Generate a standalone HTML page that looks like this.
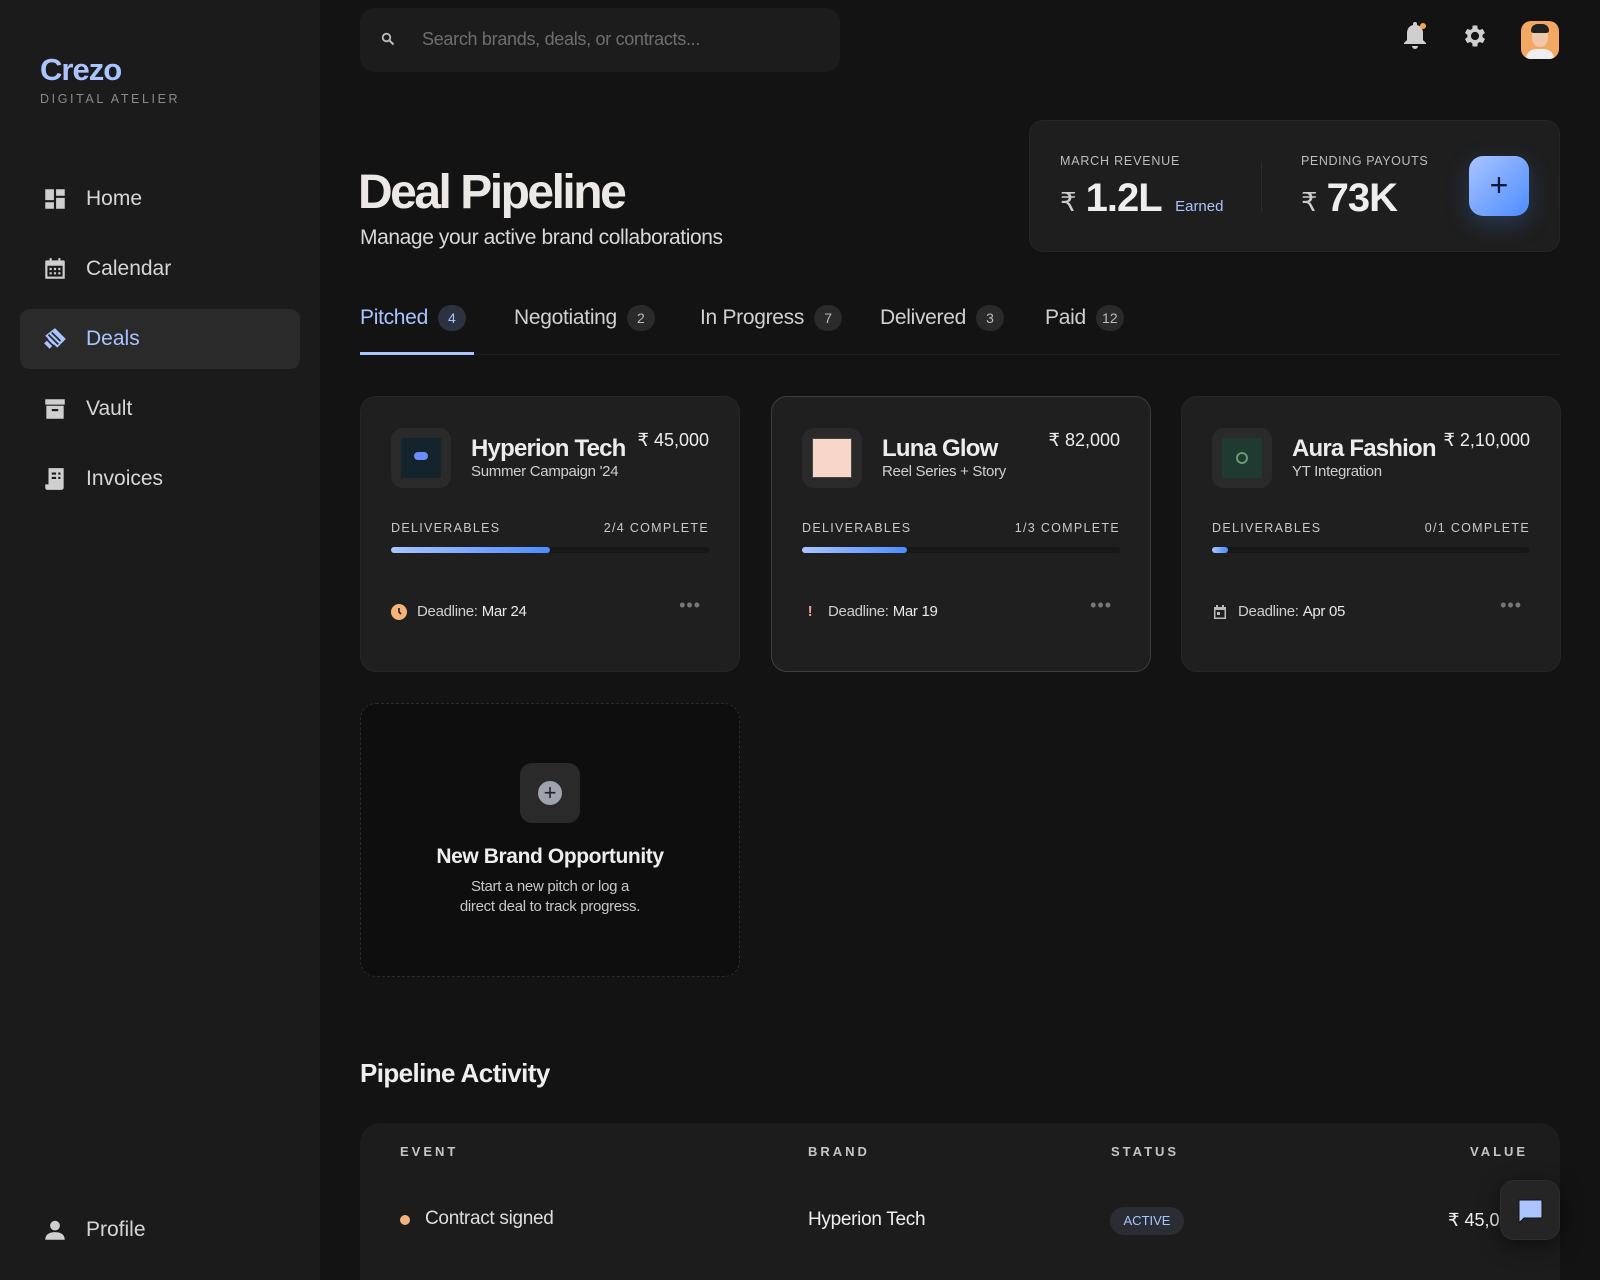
<!DOCTYPE html>
<html><head><meta charset="utf-8"><style>
*{box-sizing:border-box;margin:0;padding:0}
html{width:1600px;height:1280px;overflow:hidden}
body{width:1600px;height:1280px;background:#131313;font-family:"Liberation Sans",sans-serif;color:#e6e3e1;position:relative;overflow:hidden}
.a{position:absolute}
.side{left:0;top:0;width:320px;height:1280px;background:#1b1b1b}
.nav{left:20px;width:280px;height:60px;display:flex;align-items:center;padding-left:22px;font-size:21px;color:#d6d6d6;border-radius:10px}
.nav svg{width:26px;height:26px;margin-right:18px}
.card{width:380px;height:276px;background:#1f1f1f;border-radius:16px;border:1px solid #262626}
.logo{left:30px;top:31px;width:60px;height:60px;background:#2a2a2a;border-radius:12px}
.logo div{position:absolute;left:10px;top:10px;width:40px;height:40px}
.nm{left:110px;top:38px;font-size:24px;font-weight:bold;color:#ececec;letter-spacing:-.8px}
.sub{left:110px;top:66px;font-size:15px;color:#cfcfcf;letter-spacing:-.3px}
.pr{right:30px;top:33px;font-size:18px;color:#ececec}
.lbl{top:124px;font-size:12.5px;letter-spacing:1.3px;color:#c9c9c9}
.bar{left:30px;right:30px;top:150px;height:6px;background:#171717;border-radius:3px}
.bar div{height:6px;border-radius:3px;background:linear-gradient(90deg,#a9c4ff,#4d8cff)}
.dl{left:30px;top:206px;font-size:15px;color:#cfcfcf;display:flex;align-items:center;gap:10px;letter-spacing:-.3px}
.dots{right:38px;top:198px;color:#777;font-size:18px;letter-spacing:1px}
.tab{top:305px;font-size:21px;color:#d0d0d0;display:flex;align-items:center;gap:10px;letter-spacing:-.3px}
.bd{display:inline-block;min-width:28px;height:26px;border-radius:13px;background:#2a2a2a;font-size:14px;text-align:center;line-height:26px;color:#bbb;padding:0 6px;letter-spacing:0}
.th{top:1144px;font-size:13px;letter-spacing:3px;color:#c5c5c5;font-weight:bold}
</style></head><body>
<div class="a side"></div>
<div class="a" style="left:40px;top:52px;font-size:31px;font-weight:bold;color:#a9c4ff;letter-spacing:-1px">Crezo</div>
<div class="a" style="left:40px;top:92px;font-size:12.5px;letter-spacing:2.6px;color:#8a8a8a">DIGITAL ATELIER</div>

<div class="a nav" style="top:169px"><svg viewBox="0 0 24 24"><path fill="#cfcfcf" d="M3 3h8v10H3zM13 3h8v6h-8zM13 11h8v10h-8zM3 15h8v6H3z"/></svg>Home</div>
<div class="a nav" style="top:239px"><svg viewBox="0 0 24 24"><path fill="#cfcfcf" d="M4 4h16a1 1 0 0 1 1 1v16H3V5a1 1 0 0 1 1-1zM7 2h2v4H7zM15 2h2v4h-2z"/><path fill="#1b1b1b" d="M5 9h14v10H5z"/><path fill="#cfcfcf" d="M7 11h2v2H7zM11 11h2v2h-2zM15 11h2v2h-2zM7 15h2v2H7zM11 15h2v2h-2zM15 15h2v2h-2z"/></svg>Calendar</div>
<div class="a nav" style="top:309px;background:#2a2a2a;color:#a9c4ff"><svg viewBox="0 0 24 24"><path fill="#a9c4ff" d="M12 2l10 10-8 8-3-3-4 4-5-5 4-4-3-3z"/><path stroke="#2a2a2a" stroke-width="1.6" d="M6 8l9 9M9 6l8 8M4 12l7 7"/></svg>Deals</div>
<div class="a nav" style="top:379px"><svg viewBox="0 0 24 24"><path fill="#cfcfcf" d="M3 3h18v5H3zM4 9h16v12H4z"/><path fill="#1b1b1b" d="M9 12h6v2H9z"/></svg>Vault</div>
<div class="a nav" style="top:449px"><svg viewBox="0 0 24 24"><path fill="#cfcfcf" d="M6 2h14v18a2 2 0 0 1-2 2H5a2 2 0 0 1-2-2v-3h3z"/><path fill="#1b1b1b" d="M9 6h4v2H9zM9 10h4v2H9zM15 6h2v2h-2zM15 10h2v2h-2z"/></svg>Invoices</div>
<div class="a nav" style="top:1200px"><svg viewBox="0 0 24 24"><circle cx="12" cy="8" r="4.5" fill="#cfcfcf"/><path fill="#cfcfcf" d="M3 21c0-5 4-7 9-7s9 2 9 7z"/></svg>Profile</div>

<div class="a" style="left:360px;top:8px;width:480px;height:64px;background:#1c1c1c;border-radius:14px"></div>
<svg class="a" style="left:381px;top:32px" width="14" height="14" viewBox="0 0 14 14"><circle cx="5.5" cy="5.5" r="3.8" stroke="#bbb" stroke-width="1.8" fill="none"/><path d="M8.5 8.5l4 4" stroke="#bbb" stroke-width="2"/></svg>
<div class="a" style="left:422px;top:29px;font-size:18px;color:#6e6e6e;letter-spacing:-.3px">Search brands, deals, or contracts...</div>

<svg class="a" style="left:1402px;top:20px" width="26" height="30" viewBox="0 0 26 30"><path fill="#cfcfcf" d="M13 2a2 2 0 0 1 2 2v1c4 1 6 4 6 8v7l3 3v1H2v-1l3-3v-7c0-4 2-7 6-8V4a2 2 0 0 1 2-2zM10 26h6a3 3 0 0 1-6 0z"/><circle cx="21" cy="6" r="3" fill="#f5a55a"/></svg>
<svg class="a" style="left:1461px;top:22px" width="28" height="28" viewBox="0 0 24 24"><path fill="#cfcfcf" d="M19.4 13a7.5 7.5 0 0 0 0-2l2.1-1.6-2-3.5-2.5 1a7.5 7.5 0 0 0-1.7-1L15 3h-4l-.4 2.9a7.5 7.5 0 0 0-1.7 1l-2.5-1-2 3.5L6.5 11a7.5 7.5 0 0 0 0 2l-2.1 1.6 2 3.5 2.5-1a7.5 7.5 0 0 0 1.7 1L11 21h4l.4-2.9a7.5 7.5 0 0 0 1.7-1l2.5 1 2-3.5zM13 15.5a3.5 3.5 0 1 1 0-7 3.5 3.5 0 0 1 0 7z" transform="translate(-1 0)"/></svg>
<div class="a" style="left:1521px;top:21px;width:38px;height:38px;border-radius:10px;background:#f3a763;overflow:hidden"><div style="position:absolute;left:11px;top:6px;width:16px;height:20px;border-radius:8px;background:#f0c7a8"></div><div style="position:absolute;left:10px;top:3px;width:18px;height:9px;border-radius:8px 8px 3px 3px;background:#222"></div><div style="position:absolute;left:5px;top:28px;width:28px;height:14px;border-radius:10px 10px 0 0;background:#eee"></div></div>

<div class="a" style="left:358px;top:165px;font-size:48px;font-weight:bold;letter-spacing:-2.5px;color:#ece8e6">Deal Pipeline</div>
<div class="a" style="left:360px;top:226px;font-size:21px;color:#d8d8d8;letter-spacing:-.4px">Manage your active brand collaborations</div>

<div class="a" style="left:1029px;top:120px;width:531px;height:132px;background:#1e1e1e;border-radius:14px;border:1px solid #262626"></div>
<div class="a" style="left:1060px;top:154px;font-size:12.5px;letter-spacing:.8px;color:#bdbdbd">MARCH REVENUE</div>
<div class="a" style="left:1060px;top:176px;font-size:40px;font-weight:bold;color:#eee;letter-spacing:-1px"><span style="font-size:26px;font-weight:normal;color:#ccc">₹</span> 1.2L <span style="font-size:15px;font-weight:normal;color:#a9c4ff;margin-left:4px;letter-spacing:0">Earned</span></div>
<div class="a" style="left:1261px;top:162px;width:1px;height:50px;background:#2c2c2c"></div>
<div class="a" style="left:1301px;top:154px;font-size:12.5px;letter-spacing:.6px;color:#bdbdbd">PENDING PAYOUTS</div>
<div class="a" style="left:1301px;top:176px;font-size:40px;font-weight:bold;color:#eee;letter-spacing:-1px"><span style="font-size:26px;font-weight:normal;color:#ccc">₹</span> 73K</div>
<div class="a" style="left:1469px;top:156px;width:60px;height:60px;border-radius:14px;background:linear-gradient(135deg,#a9c4ff,#4d8cff);box-shadow:0 8px 24px rgba(77,140,255,.25);color:#0b1a3a;font-size:32px;text-align:center;line-height:58px">+</div>

<div class="a tab" style="left:360px;color:#a9c4ff">Pitched <span class="bd" style="background:#2c3240;color:#a9c4ff">4</span></div>
<div class="a tab" style="left:514px">Negotiating <span class="bd">2</span></div>
<div class="a tab" style="left:700px">In Progress <span class="bd">7</span></div>
<div class="a tab" style="left:880px">Delivered <span class="bd">3</span></div>
<div class="a tab" style="left:1045px">Paid <span class="bd">12</span></div>
<div class="a" style="left:360px;top:354px;width:1200px;height:1px;background:#1f1f1f"></div>
<div class="a" style="left:360px;top:352px;width:114px;height:3px;background:#a9c4ff"></div>

<div class="a card" style="left:360px;top:396px">
 <div class="a logo"><div style="background:#13242c"><div style="position:absolute;left:13px;top:14px;width:14px;height:8px;border-radius:4px;background:#6b8cff"></div></div></div>
 <div class="a nm">Hyperion Tech</div><div class="a sub">Summer Campaign '24</div><div class="a pr">₹ 45,000</div>
 <div class="a lbl" style="left:30px">DELIVERABLES</div><div class="a lbl" style="right:30px">2/4 COMPLETE</div>
 <div class="a bar"><div style="width:50%"></div></div>
 <div class="a dl"><svg width="16" height="16"><circle cx="8" cy="8" r="8" fill="#f5b27a"/><path d="M8 4v4l2 2" stroke="#1f1f1f" stroke-width="1.6" fill="none"/></svg>Deadline: <span style="color:#e8e8e8;margin-left:-6px">Mar 24</span></div>
 <div class="a dots">•••</div>
</div>
<div class="a card" style="left:771px;top:396px;border-color:#3a3d44">
 <div class="a logo"><div style="background:#f6d6c6;border:1px solid #444"></div></div>
 <div class="a nm">Luna Glow</div><div class="a sub">Reel Series + Story</div><div class="a pr">₹ 82,000</div>
 <div class="a lbl" style="left:30px">DELIVERABLES</div><div class="a lbl" style="right:30px">1/3 COMPLETE</div>
 <div class="a bar"><div style="width:33%"></div></div>
 <div class="a dl"><span style="color:#f39a8c;font-weight:bold;width:16px;text-align:center">!</span>Deadline: <span style="color:#e8e8e8;margin-left:-6px">Mar 19</span></div>
 <div class="a dots">•••</div>
</div>
<div class="a card" style="left:1181px;top:396px">
 <div class="a logo"><div style="background:#1f3a30"><div style="position:absolute;left:14px;top:14px;width:12px;height:12px;border-radius:6px;border:2px solid #6a9a70"></div></div></div>
 <div class="a nm">Aura Fashion</div><div class="a sub">YT Integration</div><div class="a pr">₹ 2,10,000</div>
 <div class="a lbl" style="left:30px">DELIVERABLES</div><div class="a lbl" style="right:30px">0/1 COMPLETE</div>
 <div class="a bar"><div style="width:5%"></div></div>
 <div class="a dl"><svg width="16" height="16" viewBox="0 0 16 16"><path fill="#bbb" d="M2 3h12v12H2zM4 1h2v3H4zM10 1h2v3h-2z"/><path fill="#1f1f1f" d="M3.5 6h9v7.5h-9z"/><path fill="#bbb" d="M5 8h3v3H5z"/></svg>Deadline: <span style="color:#e8e8e8;margin-left:-6px">Apr 05</span></div>
 <div class="a dots">•••</div>
</div>

<div class="a" style="left:360px;top:703px;width:380px;height:274px;background:#0e0e0e;border:1px dashed #2c2c2c;border-radius:16px"></div>
<div class="a" style="left:520px;top:763px;width:60px;height:60px;border-radius:12px;background:#2a2a2a"></div>
<div class="a" style="left:538px;top:781px;width:24px;height:24px;border-radius:12px;background:#9ea3b0;color:#222;font-size:22px;line-height:23px;text-align:center">+</div>
<div class="a" style="left:360px;top:845px;width:380px;text-align:center;font-size:21px;font-weight:bold;color:#eee;letter-spacing:-.4px">New Brand Opportunity</div>
<div class="a" style="left:360px;top:877px;width:380px;text-align:center;font-size:15px;line-height:20px;color:#c8c8c8;letter-spacing:-.3px">Start a new pitch or log a<br>direct deal to track progress.</div>

<div class="a" style="left:360px;top:1058px;font-size:26px;font-weight:bold;color:#eee;letter-spacing:-.6px">Pipeline Activity</div>
<div class="a" style="left:360px;top:1123px;width:1200px;height:157px;background:#1c1c1c;border-radius:20px 20px 0 0"></div>
<div class="a th" style="left:400px">EVENT</div>
<div class="a th" style="left:808px">BRAND</div>
<div class="a th" style="left:1111px">STATUS</div>
<div class="a th" style="left:1470px">VALUE</div>
<div class="a" style="left:400px;top:1215px;width:10px;height:10px;border-radius:5px;background:#f5b27a"></div>
<div class="a" style="left:425px;top:1208px;font-size:19px;color:#ddd;letter-spacing:-.3px">Contract signed</div>
<div class="a" style="left:808px;top:1209px;font-size:19px;color:#eee;letter-spacing:-.3px">Hyperion Tech</div>
<div class="a" style="left:1110px;top:1207px;width:74px;height:28px;border-radius:14px;background:#2a2d34;color:#a9c4ff;font-size:13px;text-align:center;line-height:28px">ACTIVE</div>
<div class="a" style="left:1448px;top:1210px;font-size:18px;color:#eee">₹ 45,000</div>
<div class="a" style="left:1500px;top:1180px;width:60px;height:60px;border-radius:14px;background:#252525;border:1px solid #2e2e2e;box-shadow:0 6px 20px rgba(0,0,0,.5)"></div>
<svg class="a" style="left:1516px;top:1196px" width="28" height="28" viewBox="0 0 28 28"><path fill="#a9c4ff" stroke="#111" stroke-width="1" d="M3 4h22a1 1 0 0 1 1 1v16a1 1 0 0 1-1 1H8l-5 5z"/></svg>
</body></html>
